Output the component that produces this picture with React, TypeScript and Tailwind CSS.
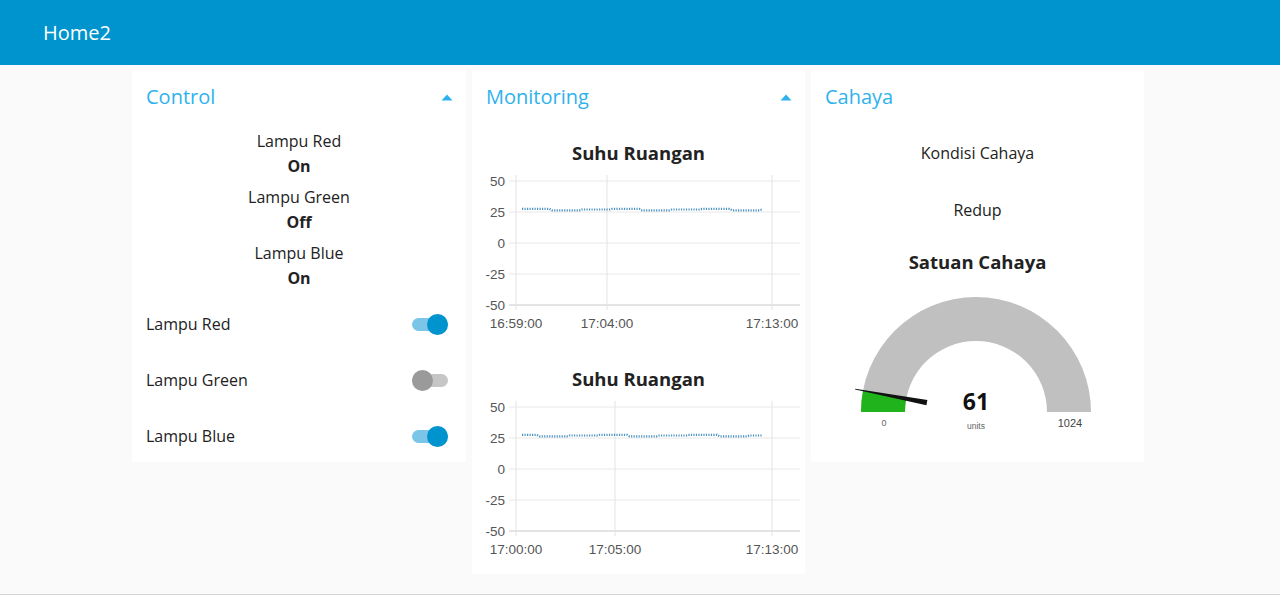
const font = "font-['Open_Sans','Noto_Sans',sans-serif]";

function Caret() {
  return (
    <svg width="12" height="7" viewBox="0 0 12 7" className="block">
      <polygon points="6,0.5 11.5,6.5 0.5,6.5" fill="#2eb2ee" />
    </svg>
  );
}

function CardHeader({ title, caret }: { title: string; caret?: boolean }) {
  return (
    <div className="flex h-[54px] shrink-0 items-center justify-between pl-[14px] pr-[13px]">
      <span className="text-[20px] text-[#2eb2ee]">{title}</span>
      {caret && <Caret />}
    </div>
  );
}

function TextWidget({ label, value }: { label: string; value: string }) {
  return (
    <div className="flex h-[56px] flex-col items-center text-[16px] text-[#222]">
      <div className="flex h-[25px] items-center">{label}</div>
      <div className="flex h-[25px] items-center font-bold">{value}</div>
    </div>
  );
}

function Toggle({ label, on }: { label: string; on: boolean }) {
  return (
    <div className="flex h-[56px] shrink-0 items-center justify-between pl-[14px] pr-[18px] text-[16px] text-[#222]">
      <span>{label}</span>
      <div className="relative h-[21px] w-[36px]">
        <div
          className={`absolute left-0 top-[4px] h-[13px] w-[36px] rounded-full ${
            on ? "bg-[#7ac5e8]" : "bg-[#c6c6c6]"
          }`}
        />
        <div
          className={`absolute top-0 h-[21px] w-[21px] rounded-full ${
            on ? "right-0 bg-[#0094ce]" : "left-0 bg-[#9a9a9a]"
          }`}
        />
      </div>
    </div>
  );
}

function series(seed: number) {
  const pts: string[] = [];
  for (let i = 0; i <= 96; i++) {
    const x = 50 + i * 2.5;
    const band = Math.floor((i + seed) / 12) % 3;
    const v = band === 1 ? 26.4 : band === 2 ? 27.0 : 27.5;
    pts.push(`${x.toFixed(1)},${(76 - v * 1.24).toFixed(1)}`);
  }
  return pts.join(" ");
}

function Chart({ ticks, seed }: { ticks: [number, string][]; seed: number }) {
  const yv = (v: number) => 76 - v * 1.24;
  return (
    <svg width={334} height={172} className="block">
      {[50, 25, 0, -25, -50].map((t) => (
        <g key={t}>
          <line
            x1={37}
            x2={328}
            y1={yv(t)}
            y2={yv(t)}
            stroke={t === -50 ? "#c8c8c8" : "#e8e8e8"}
          />
          <text
            x={33}
            y={yv(t) + 5}
            textAnchor="end"
            fontSize={13.5}
            fill="#555"
            fontFamily="Liberation Sans, Arial, sans-serif"
          >
            {t}
          </text>
        </g>
      ))}
      {ticks.map(([x, l]) => (
        <g key={l}>
          <line x1={x} x2={x} y1={8} y2={143} stroke="#e3e3e3" />
          <text
            x={x}
            y={161}
            textAnchor="middle"
            fontSize={13.5}
            fill="#555"
            fontFamily="Liberation Sans, Arial, sans-serif"
          >
            {l}
          </text>
        </g>
      ))}
      <polyline
        points={series(seed)}
        fill="none"
        stroke="#1f77b4"
        strokeWidth={2.2}
        strokeDasharray="1.2 1.3"
        opacity={0.8}
      />
    </svg>
  );
}

function ChartBlock({ ticks, seed }: { ticks: [number, string][]; seed: number }) {
  return (
    <div className="flex flex-col">
      <div className="flex h-[28px] items-center justify-center text-[18.5px] font-bold text-[#222]">
        Suhu Ruangan
      </div>
      <Chart ticks={ticks} seed={seed} />
    </div>
  );
}

function Gauge() {
  const cx = 165;
  const cy = 132;
  const ro = 115;
  const ri = 71;
  const th = (Math.PI * 61) / 1024;
  const c = Math.cos(th);
  const s = Math.sin(th);
  const ox = cx - ro * c;
  const oy = cy - ro * s;
  const ix = cx - ri * c;
  const iy = cy - ri * s;
  const tip = [cx - 123 * c, cy - 123 * s];
  const base = [cx - 50 * c, cy - 50 * s];
  const n = [s, -c];
  const needle = [
    [tip[0] + n[0] * 0.4, tip[1] + n[1] * 0.4],
    [base[0] + n[0] * 2.6, base[1] + n[1] * 2.6],
    [base[0] - n[0] * 2.6, base[1] - n[1] * 2.6],
    [tip[0] - n[0] * 0.4, tip[1] - n[1] * 0.4],
  ]
    .map((p) => p.map((q) => q.toFixed(1)).join(","))
    .join(" ");
  return (
    <svg width={333} height={170} className="block">
      <path
        d={`M ${cx - ro} ${cy} A ${ro} ${ro} 0 0 1 ${cx + ro} ${cy} L ${cx + ri} ${cy} A ${ri} ${ri} 0 0 0 ${cx - ri} ${cy} Z`}
        fill="#c0c0c0"
      />
      <path
        d={`M ${cx - ro} ${cy} A ${ro} ${ro} 0 0 1 ${ox.toFixed(1)} ${oy.toFixed(1)} L ${ix.toFixed(1)} ${iy.toFixed(1)} A ${ri} ${ri} 0 0 0 ${cx - ri} ${cy} Z`}
        fill="#21b31c"
      />
      <polygon points={needle} fill="#111" />
      <text
        x={cx}
        y={130}
        textAnchor="middle"
        fontSize={23}
        fontWeight={700}
        fill="#111"
        fontFamily="Open Sans, sans-serif"
      >
        61
      </text>
      <text x={cx} y={149} textAnchor="middle" fontSize={8.5} fill="#666" fontFamily="Liberation Sans, Arial, sans-serif">
        units
      </text>
      <text x={73} y={146} textAnchor="middle" fontSize={9} fill="#666" fontFamily="Liberation Sans, Arial, sans-serif">
        0
      </text>
      <text x={259} y={147} textAnchor="middle" fontSize={11} fill="#444" fontFamily="Liberation Sans, Arial, sans-serif">
        1024
      </text>
    </svg>
  );
}

export default function App() {
  return (
    <div className={`flex h-[595px] flex-col overflow-hidden border-b border-[#d4d4d4] bg-[#fafafa] ${font}`}>
      <header className="flex h-[65px] shrink-0 items-center bg-[#0094ce] pl-[43px]">
        <span className="text-[20px] text-white">Home2</span>
      </header>

      <main className="flex items-start gap-[6px] pl-[132px] pt-[5px]">
        <section className="h-[392px] w-[334px] overflow-hidden bg-white">
          <CardHeader title="Control" caret />
          <div className="pt-[4px]">
            <TextWidget label="Lampu Red" value="On" />
            <TextWidget label="Lampu Green" value="Off" />
            <TextWidget label="Lampu Blue" value="On" />
          </div>
          <div>
            <Toggle label="Lampu Red" on />
            <Toggle label="Lampu Green" on={false} />
            <Toggle label="Lampu Blue" on />
          </div>
        </section>

        <section className="flex w-[333px] flex-col bg-white pb-[9px]">
          <CardHeader title="Monitoring" caret />
          <div className="flex flex-col gap-[26px] pt-[15px]">
            <ChartBlock
              seed={0}
              ticks={[
                [44, "16:59:00"],
                [135, "17:04:00"],
                [300, "17:13:00"],
              ]}
            />
            <ChartBlock
              seed={5}
              ticks={[
                [44, "17:00:00"],
                [143, "17:05:00"],
                [300, "17:13:00"],
              ]}
            />
          </div>
        </section>

        <section className="flex w-[333px] flex-col bg-white pb-[12px]">
          <CardHeader title="Cahaya" />
          <div className="flex h-[57px] items-center justify-center text-[16px] text-[#222]">
            Kondisi Cahaya
          </div>
          <div className="flex h-[57px] items-center justify-center text-[16px] text-[#222]">
            Redup
          </div>
          <div className="mt-[10px] flex h-[28px] items-center justify-center text-[18.5px] font-bold text-[#222]">
            Satuan Cahaya
          </div>
          <div className="mt-[4px]">
            <Gauge />
          </div>
        </section>
      </main>
    </div>
  );
}
